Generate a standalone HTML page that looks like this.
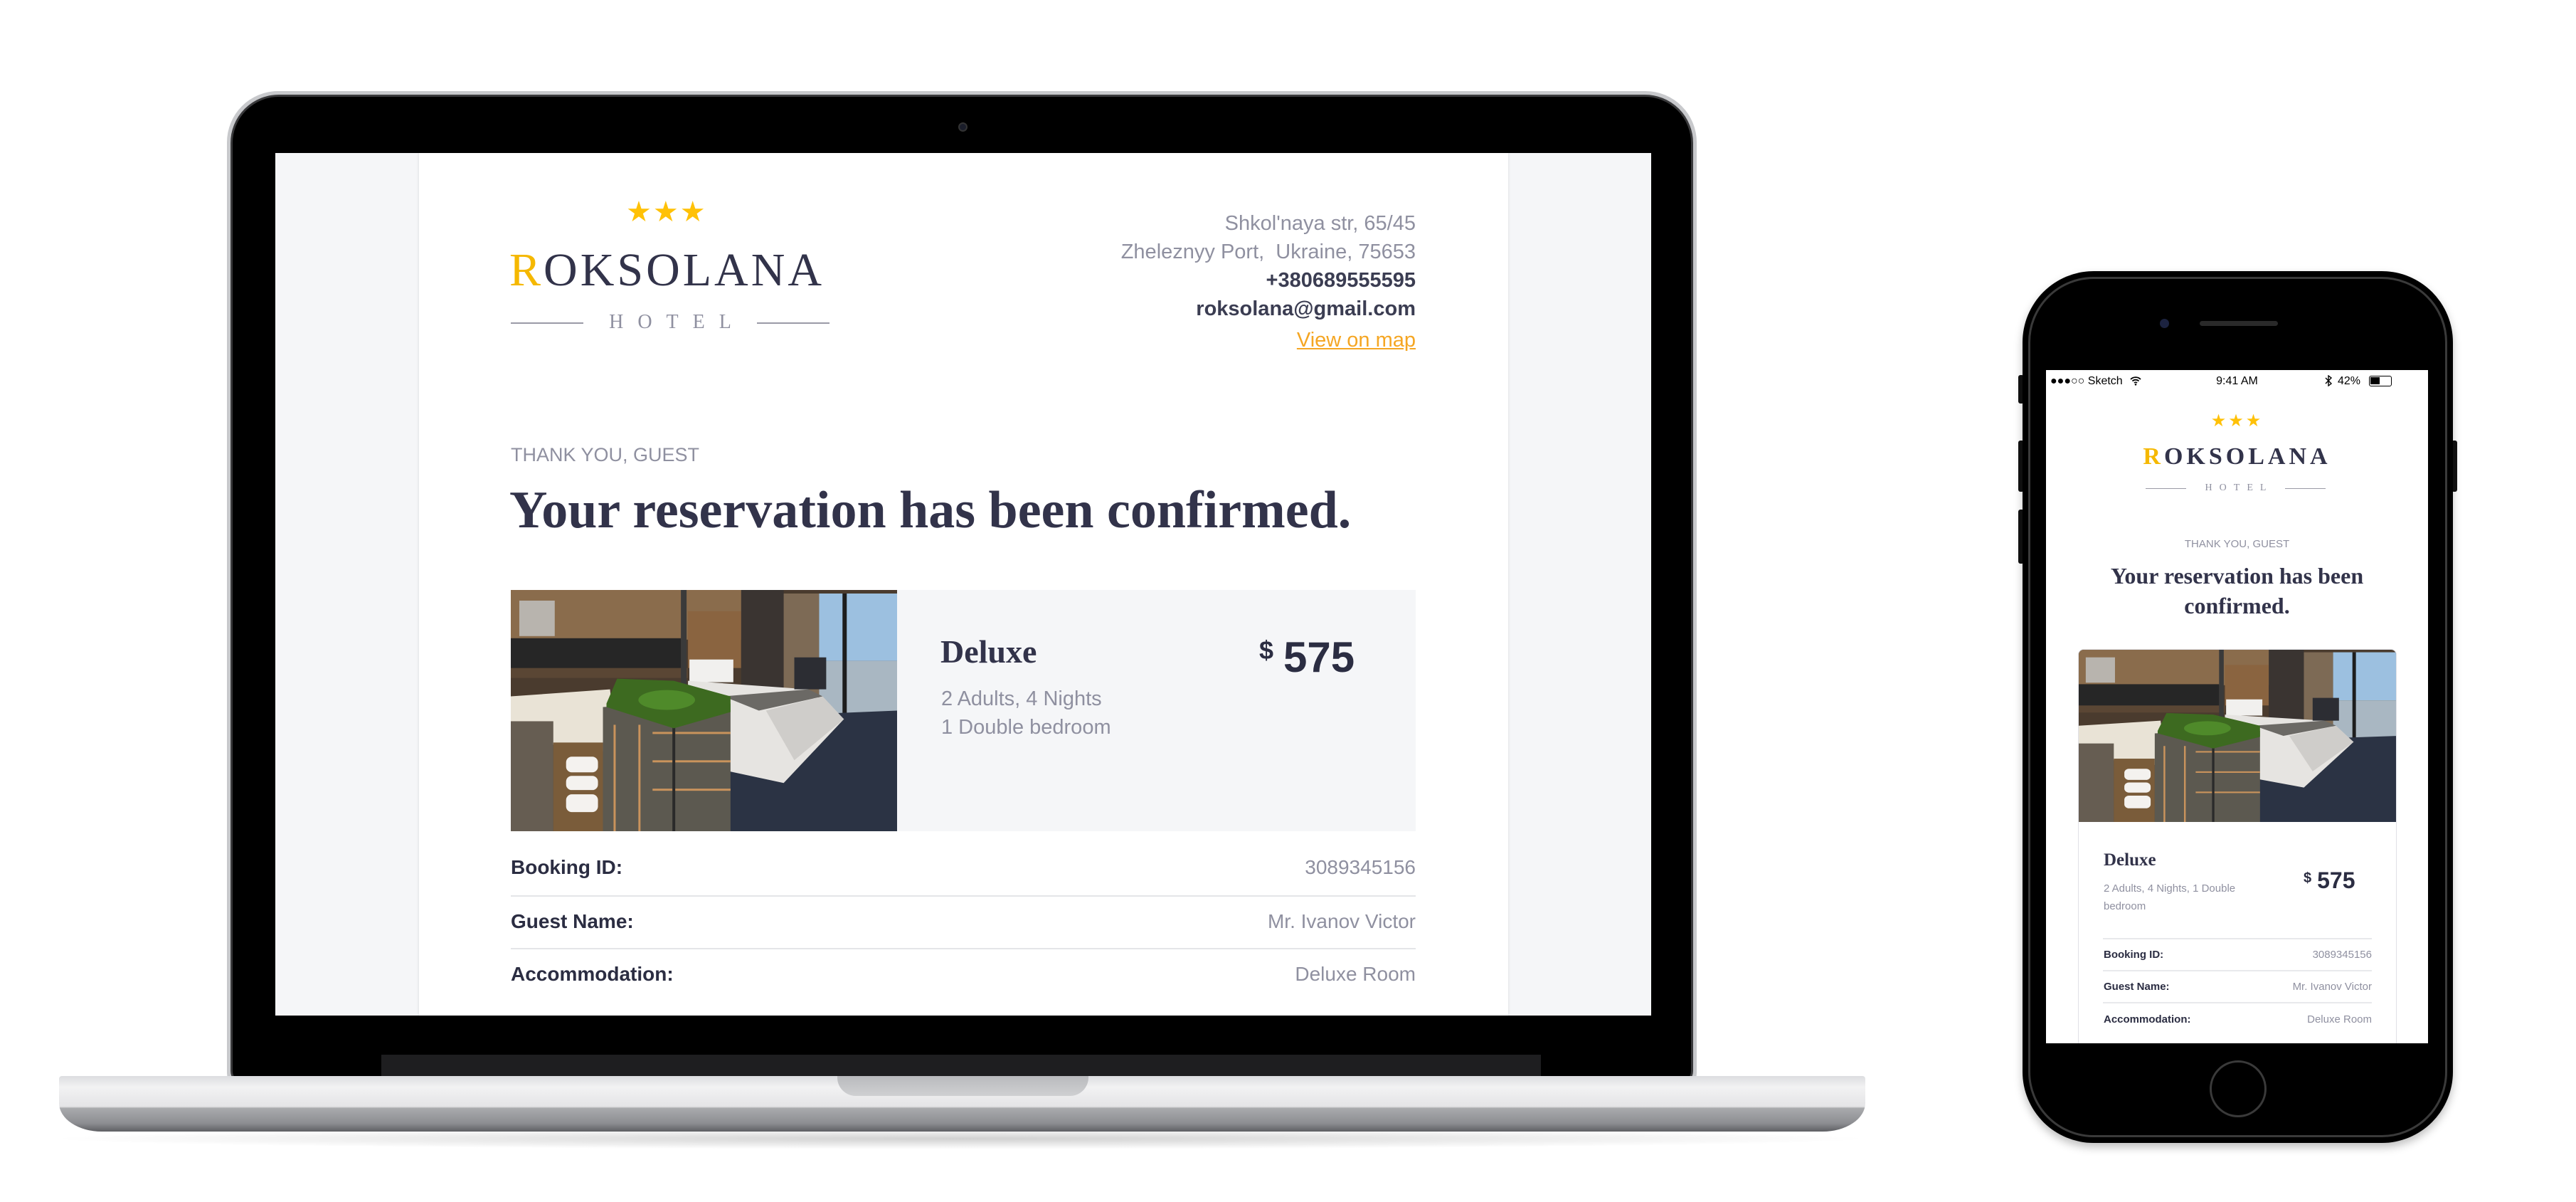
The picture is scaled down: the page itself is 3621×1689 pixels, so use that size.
<!DOCTYPE html>
<html><head><meta charset="utf-8">
<style>
*{margin:0;padding:0;box-sizing:border-box}
body{width:3621px;height:1689px;background:#fff;position:relative;overflow:hidden;font-family:"Liberation Sans",sans-serif}
.a{position:absolute}
.serif{font-family:"Liberation Serif",serif}
.r{text-align:right}
</style></head><body>
<svg width="0" height="0" style="position:absolute">
<defs>
<symbol id="photo" viewBox="0 0 545 340" preserveAspectRatio="none">
<rect width="545" height="340" fill="#4a3b2e"/>
<rect x="0" y="0" width="330" height="70" fill="#8a6c4c"/>
<rect x="12" y="15" width="50" height="50" fill="#b8b4ae"/>
<rect x="250" y="30" width="75" height="80" fill="#8a6440"/>
<rect x="0" y="68" width="240" height="47" fill="#262626"/>
<rect x="0" y="110" width="250" height="14" fill="#5a4634"/>
<rect x="325" y="0" width="60" height="140" fill="#3a3431"/>
<rect x="385" y="5" width="50" height="170" fill="#7d6a55"/>
<rect x="435" y="5" width="110" height="95" fill="#9cc0e0"/>
<rect x="435" y="100" width="110" height="80" fill="#a9b7c2"/>
<rect x="468" y="5" width="6" height="175" fill="#1d1d1d"/>
<rect x="240" y="0" width="8" height="150" fill="#3a3a3a"/>
<polygon points="300,180 545,170 545,340 300,340" fill="#2b3344"/>
<rect x="252" y="98" width="62" height="32" fill="#f1f0ee"/>
<polygon points="250,128 420,140 470,182 385,272 310,256 250,160" fill="#e6e4e1"/>
<polygon points="300,150 420,140 440,150 350,170" fill="#6b6965"/>
<polygon points="360,170 440,150 470,182 400,240" fill="#cfcdca"/>
<rect x="400" y="95" width="45" height="45" fill="#2c2d33"/>
<polygon points="0,150 140,140 150,230 0,210" fill="#e9e3d6"/>
<rect x="0" y="185" width="60" height="155" fill="#665d52"/>
<rect x="60" y="215" width="70" height="125" fill="#7a5c3a"/>
<rect x="78" y="235" width="45" height="22" fill="#f4f2ef" rx="8"/>
<rect x="78" y="262" width="45" height="20" fill="#f4f2ef" rx="8"/>
<rect x="78" y="288" width="45" height="25" fill="#f4f2ef" rx="8"/>
<polygon points="130,165 230,160 310,160 310,340 130,340" fill="#5c5950"/>
<rect x="145" y="190" width="3" height="150" fill="#c9935c"/>
<rect x="180" y="190" width="3" height="150" fill="#c9935c"/>
<rect x="200" y="200" width="110" height="3" fill="#c9935c"/>
<rect x="200" y="240" width="110" height="3" fill="#c9935c"/>
<rect x="200" y="280" width="110" height="3" fill="#c9935c"/>
<rect x="228" y="175" width="4" height="165" fill="#2a2a2a"/>
<polygon points="135,160 150,125 230,128 310,150 310,172 230,195 135,165" fill="#3d6a20"/>
<ellipse cx="220" cy="155" rx="40" ry="14" fill="#4f8a2a"/>
</symbol>
</defs>
</svg>

<div class="a" style="left:60px;top:1585px;width:2580px;height:30px;background:radial-gradient(ellipse at center,rgba(0,0,0,.18),rgba(0,0,0,0) 70%)"></div>
<div class="a" style="left:319px;top:128px;width:2066px;height:1400px;border-radius:72px 72px 20px 20px;background:#c8c9cc;padding:5px">
 <div style="width:100%;height:100%;border-radius:68px 68px 18px 18px;background:#000;border:3px solid #3a3a3c"></div>
</div>
<div class="a" style="left:536px;top:1482px;width:1630px;height:32px;background:#1e1e20"></div>
<div class="a" style="left:1347px;top:172px;width:13px;height:13px;border-radius:50%;background:#1a1d2a;border:2px solid #333"></div>
<div class="a" style="left:387px;top:215px;width:1934px;height:1212px;background:#f5f6f8;overflow:hidden">
 <div class="a" style="left:202px;top:0;width:1531px;height:1212px;background:#fff;box-shadow:0 0 4px rgba(0,0,0,.12)"></div>
</div>
<div class="a" style="left:880px;top:278px;font-size:40px;color:#ffc107;letter-spacing:2px;line-height:40px">★★★</div>
<div class="a serif" style="left:716px;top:345px;font-size:66px;line-height:70px;color:#32334a;letter-spacing:4px">
<span style="color:#f5b800">R</span>OKSOLANA</div>
<div class="a" style="left:718px;top:453px;width:102px;height:2px;background:#9a9aa6"></div>
<div class="a" style="left:1064px;top:453px;width:102px;height:2px;background:#9a9aa6"></div>
<div class="a serif" style="left:830px;top:436px;width:224px;font-size:28px;line-height:34px;color:#8f90a0;letter-spacing:20px;text-align:center;padding-left:20px">HOTEL</div>

<div class="a r" style="left:1400px;top:294px;width:590px;font-size:29px;line-height:40px;color:#8f90a0">Shkol'naya str, 65/45<br>Zheleznyy Port,&nbsp; Ukraine, 75653</div>
<div class="a r" style="left:1400px;top:374px;width:590px;font-size:29px;line-height:40px;color:#3b3d52;font-weight:bold">+380689555595<br>roksolana@gmail.com</div>
<div class="a r" style="left:1400px;top:458px;width:590px;font-size:29px;line-height:40px;color:#f5a623;text-decoration:underline">View on map</div>

<div class="a" style="left:718px;top:622px;font-size:27px;line-height:34px;color:#8f90a0">THANK YOU, GUEST</div>
<div class="a serif" style="left:716px;top:674px;font-size:74px;line-height:86px;color:#32334a;font-weight:bold">Your reservation has been confirmed.</div>

<div class="a" style="left:718px;top:829px;width:1272px;height:339px;background:#f5f6f8"></div>
<svg class="a" style="left:718px;top:829px" width="543" height="339"><use href="#photo"/></svg>
<div class="a serif" style="left:1322px;top:888px;font-size:46px;line-height:56px;color:#32334a;font-weight:bold">Deluxe</div>
<div class="a" style="left:1770px;top:878px;font-size:60px;line-height:72px;color:#2b2d42;font-weight:bold"><span style="font-size:36px;vertical-align:18px;margin-right:14px">$</span>575</div>
<div class="a" style="left:1323px;top:962px;font-size:29px;line-height:40px;color:#8f90a0">2 Adults, 4 Nights<br>1 Double bedroom</div>

<div class="a" style="left:718px;top:1200px;font-size:28px;line-height:38px;color:#2b2d42;font-weight:bold">Booking ID:</div>
<div class="a r" style="left:1500px;top:1200px;width:490px;font-size:28px;line-height:38px;color:#8f90a0">3089345156</div>
<div class="a" style="left:718px;top:1258px;width:1272px;height:2px;background:#e4e5e8"></div>
<div class="a" style="left:718px;top:1276px;font-size:28px;line-height:38px;color:#2b2d42;font-weight:bold">Guest Name:</div>
<div class="a r" style="left:1500px;top:1276px;width:490px;font-size:28px;line-height:38px;color:#8f90a0">Mr. Ivanov Victor</div>
<div class="a" style="left:718px;top:1332px;width:1272px;height:2px;background:#e4e5e8"></div>
<div class="a" style="left:718px;top:1350px;font-size:28px;line-height:38px;color:#2b2d42;font-weight:bold">Accommodation:</div>
<div class="a r" style="left:1500px;top:1350px;width:490px;font-size:28px;line-height:38px;color:#8f90a0">Deluxe Room</div>

<div class="a" style="left:83px;top:1512px;width:2539px;height:78px;border-radius:4px 4px 60px 60px/4px 4px 40px 40px;background:linear-gradient(#dcdde0 0%,#f2f2f3 20%,#e4e4e6 55%,#a9aaad 58%,#8d8e92 85%,#5e5f63 100%)"></div>
<div class="a" style="left:1177px;top:1512px;width:353px;height:28px;border-radius:0 0 26px 26px;background:linear-gradient(#b9babd,#cfd0d2)"></div>

<div class="a" style="left:2837px;top:527px;width:8px;height:40px;background:#111;border-radius:3px"></div>
<div class="a" style="left:2837px;top:619px;width:8px;height:72px;background:#111;border-radius:3px"></div>
<div class="a" style="left:2837px;top:716px;width:8px;height:76px;background:#111;border-radius:3px"></div>
<div class="a" style="left:3446px;top:619px;width:8px;height:72px;background:#111;border-radius:3px"></div>
<div class="a" style="left:2843px;top:381px;width:605px;height:1225px;border-radius:100px;background:#000;box-shadow:0 6px 12px rgba(0,0,0,.25)">
 <div style="position:absolute;left:8px;top:8px;right:8px;bottom:8px;border-radius:92px;border:3px solid #3a3a3a"></div>
</div>
<div class="a" style="left:3092px;top:451px;width:110px;height:7px;border-radius:4px;background:#2a2a2a"></div>
<div class="a" style="left:3036px;top:448px;width:13px;height:13px;border-radius:50%;background:#1c2340"></div>
<div class="a" style="left:3106px;top:1490px;width:80px;height:80px;border-radius:50%;border:3px solid #3a3a3a"></div>
<div class="a" style="left:2876px;top:520px;width:537px;height:946px;background:#fff;overflow:hidden">
 <div class="a" style="left:6px;top:5px;font-size:16px;line-height:22px;color:#000">●●●○○ Sketch</div>
 <svg class="a" style="left:118px;top:8px" width="16" height="14" viewBox="0 0 16 14"><path d="M1 5a10 10 0 0 1 14 0M3.5 7.5a6.5 6.5 0 0 1 9 0M6 10a3 3 0 0 1 4 0" stroke="#000" stroke-width="1.8" fill="none"/><circle cx="8" cy="12.3" r="1.3"/></svg>
 <div class="a" style="left:0;top:5px;width:537px;text-align:center;font-size:16px;line-height:22px;color:#000">9:41 AM</div>
 <div class="a" style="left:410px;top:5px;font-size:16px;line-height:22px;color:#000">42%</div>
 <svg class="a" style="left:392px;top:7px" width="10" height="16" viewBox="0 0 10 16"><path d="M1 4l8 8-4 3V1l4 3-8 8" stroke="#000" stroke-width="1.4" fill="none"/></svg>
 <div class="a" style="left:454px;top:8px;width:32px;height:15px;border:1.5px solid #000;border-radius:3px"><div style="width:13px;height:10px;margin:1px;background:#000"></div></div>
 <div class="a" style="left:0;top:60px;width:537px;text-align:center;font-size:24px;line-height:24px;color:#ffc107;letter-spacing:3px">★★★</div>
 <div class="a serif" style="left:0;top:103px;width:537px;text-align:center;font-size:34px;line-height:38px;color:#32334a;letter-spacing:5px;font-weight:bold"><span style="color:#f5b800">R</span>OKSOLANA</div>
 <div class="a" style="left:140px;top:166px;width:57px;height:1px;background:#9a9aa6"></div>
 <div class="a" style="left:336px;top:166px;width:57px;height:1px;background:#9a9aa6"></div>
 <div class="a serif" style="left:197px;top:158px;width:139px;text-align:center;font-size:14px;line-height:16px;color:#8f90a0;letter-spacing:10px;padding-left:10px">HOTEL</div>
 <div class="a" style="left:0;top:236px;width:537px;text-align:center;font-size:15px;line-height:18px;color:#8f90a0">THANK YOU, GUEST</div>
 <div class="a serif" style="left:0;top:268px;width:537px;text-align:center;font-size:32px;line-height:42px;color:#32334a;font-weight:bold">Your reservation has been<br>confirmed.</div>
 <div class="a" style="left:45px;top:392px;width:448px;height:600px;border:1px solid #e0e1e6;border-radius:8px 8px 0 0;overflow:hidden;background:#fff">
  <svg class="a" style="left:0;top:0" width="448" height="242"><use href="#photo"/></svg>
 </div>
 <div class="a serif" style="left:81px;top:674px;font-size:25px;line-height:30px;color:#32334a;font-weight:bold">Deluxe</div>
 <div class="a" style="left:81px;top:716px;width:240px;font-size:15px;line-height:25px;color:#8f90a0">2 Adults, 4 Nights, 1 Double bedroom</div>
 <div class="a" style="left:362px;top:694px;font-size:32px;line-height:40px;color:#2b2d42;font-weight:bold"><span style="font-size:20px;vertical-align:8px;margin-right:8px">$</span>575</div>
 <div class="a" style="left:80px;top:798px;width:378px;height:2px;background:#e8e9ec"></div>
 <div class="a" style="left:81px;top:812px;font-size:15px;line-height:20px;color:#2b2d42;font-weight:bold">Booking ID:</div>
 <div class="a r" style="left:258px;top:812px;width:200px;font-size:15px;line-height:20px;color:#8f90a0">3089345156</div>
 <div class="a" style="left:80px;top:843px;width:378px;height:2px;background:#e8e9ec"></div>
 <div class="a" style="left:81px;top:857px;font-size:15px;line-height:20px;color:#2b2d42;font-weight:bold">Guest Name:</div>
 <div class="a r" style="left:258px;top:857px;width:200px;font-size:15px;line-height:20px;color:#8f90a0">Mr. Ivanov Victor</div>
 <div class="a" style="left:80px;top:888px;width:378px;height:2px;background:#e8e9ec"></div>
 <div class="a" style="left:81px;top:903px;font-size:15px;line-height:20px;color:#2b2d42;font-weight:bold">Accommodation:</div>
 <div class="a r" style="left:258px;top:903px;width:200px;font-size:15px;line-height:20px;color:#8f90a0">Deluxe Room</div>
</div>
</body></html>
